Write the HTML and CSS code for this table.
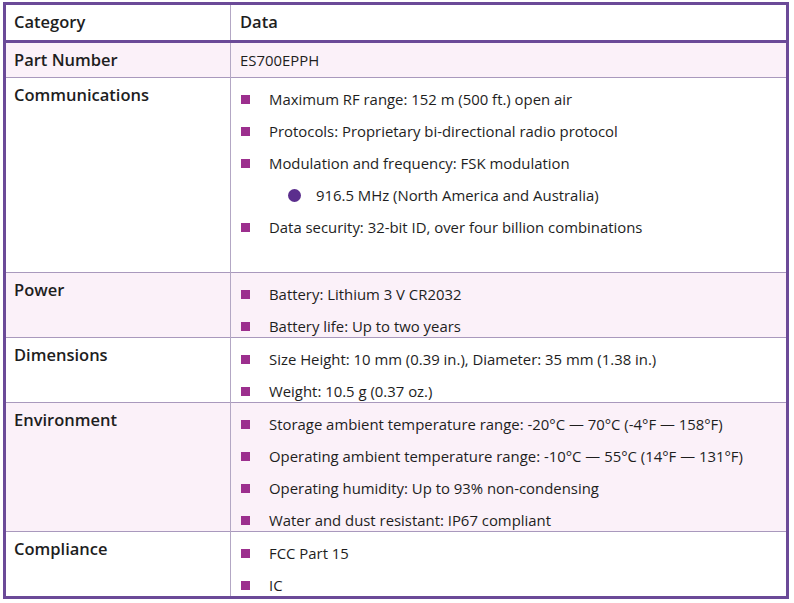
FILE: index.html
```html
<!DOCTYPE html>
<html>
<head>
<meta charset="utf-8">
<link rel="stylesheet" href="styles.css">
</head>
<body>
<table class="spec">
  <thead>
    <tr><th class="cat">Category</th><th class="dat">Data</th></tr>
  </thead>
  <tbody>
    <tr class="alt">
      <td class="label">Part Number</td>
      <td class="plain">ES700EPPH</td>
    </tr>
    <tr>
      <td class="label">Communications</td>
      <td>
        <ul class="items">
          <li>Maximum RF range: 152 m (500 ft.) open air</li>
          <li>Protocols: Proprietary bi-directional radio protocol</li>
          <li>Modulation and frequency: FSK modulation</li>
          <li class="sub">916.5 MHz (North America and Australia)</li>
          <li>Data security: 32-bit ID, over four billion combinations</li>
        </ul>
        <div class="spacer"></div>
      </td>
    </tr>
    <tr class="alt">
      <td class="label">Power</td>
      <td>
        <ul class="items">
          <li>Battery: Lithium 3 V CR2032</li>
          <li>Battery life: Up to two years</li>
        </ul>
      </td>
    </tr>
    <tr>
      <td class="label">Dimensions</td>
      <td>
        <ul class="items">
          <li>Size Height: 10 mm (0.39 in.), Diameter: 35 mm (1.38 in.)</li>
          <li>Weight: 10.5 g (0.37 oz.)</li>
        </ul>
      </td>
    </tr>
    <tr class="alt">
      <td class="label">Environment</td>
      <td>
        <ul class="items">
          <li>Storage ambient temperature range: -20°C — 70°C (-4°F — 158°F)</li>
          <li>Operating ambient temperature range: -10°C — 55°C (14°F — 131°F)</li>
          <li>Operating humidity: Up to 93% non-condensing</li>
          <li>Water and dust resistant: IP67 compliant</li>
        </ul>
      </td>
    </tr>
    <tr>
      <td class="label">Compliance</td>
      <td>
        <ul class="items">
          <li>FCC Part 15</li>
          <li>IC</li>
        </ul>
      </td>
    </tr>
  </tbody>
</table>
</body>
</html>
```

FILE: styles.css
```css
html, body {
  margin: 0;
  padding: 0;
  background: #ffffff;
}
body {
  padding: 2px 0 0 3px;
  font-family: "Open Sans", "Liberation Sans", sans-serif;
  color: #1e1e1e;
}
.spec {
  width: 786px;
  border-collapse: collapse;
  border: 3px solid #6b4a98;
  table-layout: fixed;
}
.spec th {
  text-align: left;
  font-weight: 600;
  font-size: 16.5px;
  line-height: 20px;
  padding: 7px 10px 8px 9px;
  border-bottom: 3px solid #6b4a98;
  background: #ffffff;
}
.spec th.cat {
  width: 206px;
  padding-left: 8px;
  border-right: 1px solid #b3a7c4;
}
.spec td {
  vertical-align: top;
  padding: 7px 10px 1px 9px;
  border-top: 1px solid #a999bd;
  font-size: 14.9px;
  line-height: 20px;
}
.spec td.label {
  font-weight: 600;
  font-size: 16.5px;
  padding-left: 8px;
  border-right: 1px solid #b3a7c4;
}
.spec td.plain {
  padding-bottom: 7px;
}
.spec tr.alt td {
  background: #fbf1f9;
}
.items {
  list-style: none;
  margin: 4px 0 0 0;
  padding: 0;
}
.items li {
  position: relative;
  padding-left: 29px;
  margin-top: 12px;
}
.items li:first-child {
  margin-top: 0;
}
.items li::before {
  content: "";
  position: absolute;
  left: 1px;
  top: 6px;
  width: 9px;
  height: 9px;
  background: #9c2f8e;
}
.items li.sub {
  padding-left: 76px;
}
.items li.sub::before {
  left: 48px;
  top: 4px;
  width: 13px;
  height: 13px;
  border-radius: 50%;
  background: #5b2e8d;
}
.spacer {
  height: 34px;
}
```
